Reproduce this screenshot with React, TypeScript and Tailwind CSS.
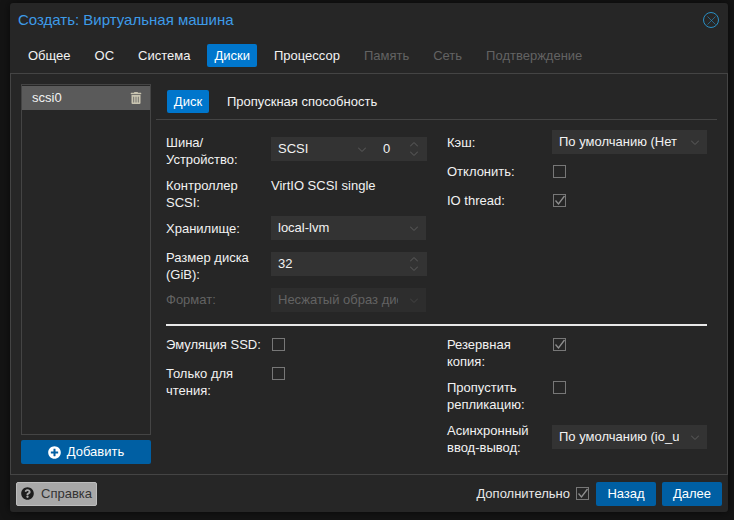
import { X } from "lucide-react";
import { FaPlusCircle, FaQuestionCircle, FaTrashAlt } from "react-icons/fa";

const labelCls = "w-[105px] shrink-0 text-[13px] leading-[17px] text-[#f2f2f2]";

function Chevron({ dim }: { dim?: boolean }) {
  return (
    <svg width="8" height="5" viewBox="0 0 8 5" fill="none" className="shrink-0">
      <path d="M0 0.5l4 4 4-4" stroke={dim ? "#444444" : "#5e5e5e"} strokeWidth="1" />
    </svg>
  );
}

function Spinner() {
  return (
    <svg width="8" height="14" viewBox="0 0 8 14" fill="none" className="shrink-0">
      <path d="M0 4.5l4-4 4 4M0 9.5l4 4 4-4" stroke="#5e5e5e" strokeWidth="1" />
    </svg>
  );
}

function Select({ value, disabled }: { value: string; disabled?: boolean }) {
  return (
    <div className={`flex h-6 w-[155px] shrink-0 items-center justify-between pl-[7px] pr-[8px] ${disabled ? "bg-[#2d2d2d]" : "bg-[#333333]"}`}>
      <span className={`w-[120px] overflow-hidden whitespace-nowrap text-[13px] ${disabled ? "text-[#636363]" : "text-[#f2f2f2]"}`}>
        {value}
      </span>
      <Chevron dim={disabled} />
    </div>
  );
}

function Check({ checked, className = "" }: { checked?: boolean; className?: string }) {
  return (
    <div className={`relative h-[13px] w-[13px] shrink-0 border border-[#777777] ${className}`}>
      {checked && (
        <svg width="13" height="13" viewBox="0 0 13 13" fill="none" className="absolute -left-px -top-px">
          <path d="M2.5 6.5l3 3.5 6-8" stroke="#8f8f8f" strokeWidth="1.3" />
        </svg>
      )}
    </div>
  );
}

function Field({ label, children, className = "" }: { label: string; children: React.ReactNode; className?: string }) {
  return (
    <div className={`flex items-start ${className}`}>
      <div className={labelCls}>{label}</div>
      {children}
    </div>
  );
}

const tabs = [
  { name: "Общее", cls: "text-[#f2f2f2]" },
  { name: "ОС", cls: "text-[#f2f2f2]" },
  { name: "Система", cls: "text-[#f2f2f2]" },
  { name: "Диски", cls: "bg-[#0076cc] rounded-[2px] text-white" },
  { name: "Процессор", cls: "text-[#f2f2f2]" },
  { name: "Память", cls: "text-[#636363]" },
  { name: "Сеть", cls: "text-[#636363]" },
  { name: "Подтверждение", cls: "text-[#636363]" },
];

export default function App() {
  return (
    <div className="h-[520px] w-[734px] overflow-hidden bg-[#141414] pl-[10px] pt-[3px] font-['Liberation_Sans',Arial,sans-serif]">
      <div className="flex h-[509px] w-[718px] flex-col rounded-[3px] bg-[#262626] shadow-[0_0_8px_rgba(0,0,0,0.6)]">
        {/* header */}
        <div className="flex h-[36px] shrink-0 items-center justify-between pb-[2px] pl-[8px] pr-[9px]">
          <span className="text-[15px] text-[#3d9be8]">Создать: Виртуальная машина</span>
          <div className="flex h-4 w-4 items-center justify-center rounded-full border border-[#2a8fc4]">
            <X size={15} strokeWidth={1} className="shrink-0 text-[#2a8fc4]" />
          </div>
        </div>

        {/* wizard tabs */}
        <div className="flex h-[34px] shrink-0 items-start gap-[10px] pl-[11px] pt-[5px]">
          {tabs.map((t) => (
            <div key={t.name} className={`flex h-[23px] items-center px-[7px] text-[13px] ${t.cls}`}>
              {t.name}
            </div>
          ))}
        </div>

        {/* body */}
        <div className="flex min-h-0 flex-1 border border-[#444444]">
          <div className="flex w-[145px] shrink-0 flex-col pl-[10px] pt-[10px]">
            <div className="h-[351px] w-[130px] border border-[#444444] pt-px">
              <div className="flex h-[24px] items-center justify-between bg-[#5a5a5a] pl-[10px] pr-[8px]">
                <span className="text-[13px] text-[#f2f2f2]">scsi0</span>
                <FaTrashAlt size={12} className="text-[#c9c4b0]" />
              </div>
            </div>
            <div className="mt-[5px] flex h-6 w-[130px] items-center justify-center gap-[6px] rounded-[2px] bg-[#005fa3] text-[13px] text-white">
              <FaPlusCircle size={13} />
              Добавить
            </div>
          </div>

          <div className="flex min-w-0 flex-1 flex-col">
            <div className="mr-[10px] flex h-[46px] shrink-0 items-start gap-[18px] border-b border-[#444444] pl-[11px] pt-[16px]">
              <div className="flex h-[23px] w-[42px] items-center justify-center rounded-[2px] bg-[#0076cc] text-[13px] text-white">
                Диск
              </div>
              <div className="flex h-[23px] items-center text-[13px] text-[#f2f2f2]">Пропускная способность</div>
            </div>

            <div className="flex pl-[10px] pt-[10px]">
              <div className="flex w-[281px] shrink-0 flex-col pt-[7px]">
                <div className="flex h-6">
                  <div className={`${labelCls} -mt-[3px]`}>Шина/ Устройство:</div>
                  <div className="flex h-6 w-[156px] items-center bg-[#333333] pl-[7px] pr-[9px]">
                    <span className="w-[80px] text-[13px] text-[#f2f2f2]">SCSI</span>
                    <Chevron />
                    <span className="ml-[17px] flex-1 text-[13px] text-[#f2f2f2]">0</span>
                    <Spinner />
                  </div>
                </div>
                <Field label="Контроллер SCSI:" className="mt-[16px] h-[34px]">
                  <span className="text-[13px] leading-[17px] text-[#f2f2f2]">VirtIO SCSI single</span>
                </Field>
                <div className="mt-[5px] flex h-6 items-center">
                  <div className={labelCls}>Хранилище:</div>
                  <Select value="local-lvm" />
                </div>
                <div className="mt-[12px] flex h-6">
                  <div className={`${labelCls} -mt-[3px]`}>Размер диска (GiB):</div>
                  <div className="flex h-6 w-[156px] items-center bg-[#333333] pl-[7px] pr-[9px]">
                    <span className="flex-1 text-[13px] text-[#f2f2f2]">32</span>
                    <Spinner />
                  </div>
                </div>
                <div className="mt-[12px] flex h-6 items-center">
                  <div className="w-[105px] shrink-0 text-[13px] text-[#636363]">Формат:</div>
                  <Select value="Несжатый образ диска" disabled />
                </div>
              </div>

              <div className="flex flex-col">
                <div className="flex h-6 items-center">
                  <div className={labelCls}>Кэш:</div>
                  <Select value="По умолчанию (Нет" />
                </div>
                <div className="mt-[11px] flex h-[13px] items-center">
                  <div className={labelCls}>Отклонить:</div>
                  <Check className="ml-px" />
                </div>
                <div className="mt-[16px] flex h-[13px] items-center">
                  <div className={labelCls}>IO thread:</div>
                  <Check checked className="ml-px" />
                </div>
              </div>
            </div>

            <div className="ml-[10px] mr-[20px] mt-[12px] h-[2px] shrink-0 bg-[#e8e8e8]" />

            <div className="flex pl-[10px] pt-[10px]">
              <div className="flex w-[281px] shrink-0 flex-col">
                <Field label="Эмуляция SSD:">
                  <Check className="ml-px mt-[2px]" />
                </Field>
                <Field label="Только для чтения:" className="mt-[12px]">
                  <Check className="ml-px mt-[2px]" />
                </Field>
              </div>
              <div className="flex flex-col">
                <Field label="Резервная копия:">
                  <Check checked className="ml-px mt-[2px]" />
                </Field>
                <Field label="Пропустить репликацию:" className="mt-[9px]">
                  <Check className="ml-px mt-[2px]" />
                </Field>
                <Field label="Асинхронный ввод-вывод:" className="mt-[9px]">
                  <div className="mt-[3px]">
                    <Select value="По умолчанию (io_uring)" />
                  </div>
                </Field>
              </div>
            </div>
          </div>
        </div>

        {/* footer */}
        <div className="flex h-[37px] shrink-0 items-center px-[6px]">
          <div className="flex h-6 w-[81px] items-center justify-center gap-[7px] rounded-[2px] border border-[#bdbdbd] bg-[#a8a8a8] text-[13px] text-[#333333]">
            <FaQuestionCircle size={13} className="text-[#1c1c1c]" />
            Справка
          </div>
          <div className="flex-1" />
          <span className="text-[13px] text-[#e8e8e8]">Дополнительно</span>
          <Check checked className="ml-[6px]" />
          <div className="ml-[7px] flex h-6 w-[60px] items-center justify-center rounded-[2px] bg-[#005fa3] text-[13px] text-white">
            Назад
          </div>
          <div className="ml-[6px] flex h-6 w-[60px] items-center justify-center rounded-[2px] bg-[#005fa3] text-[13px] text-white">
            Далее
          </div>
        </div>
      </div>
    </div>
  );
}
